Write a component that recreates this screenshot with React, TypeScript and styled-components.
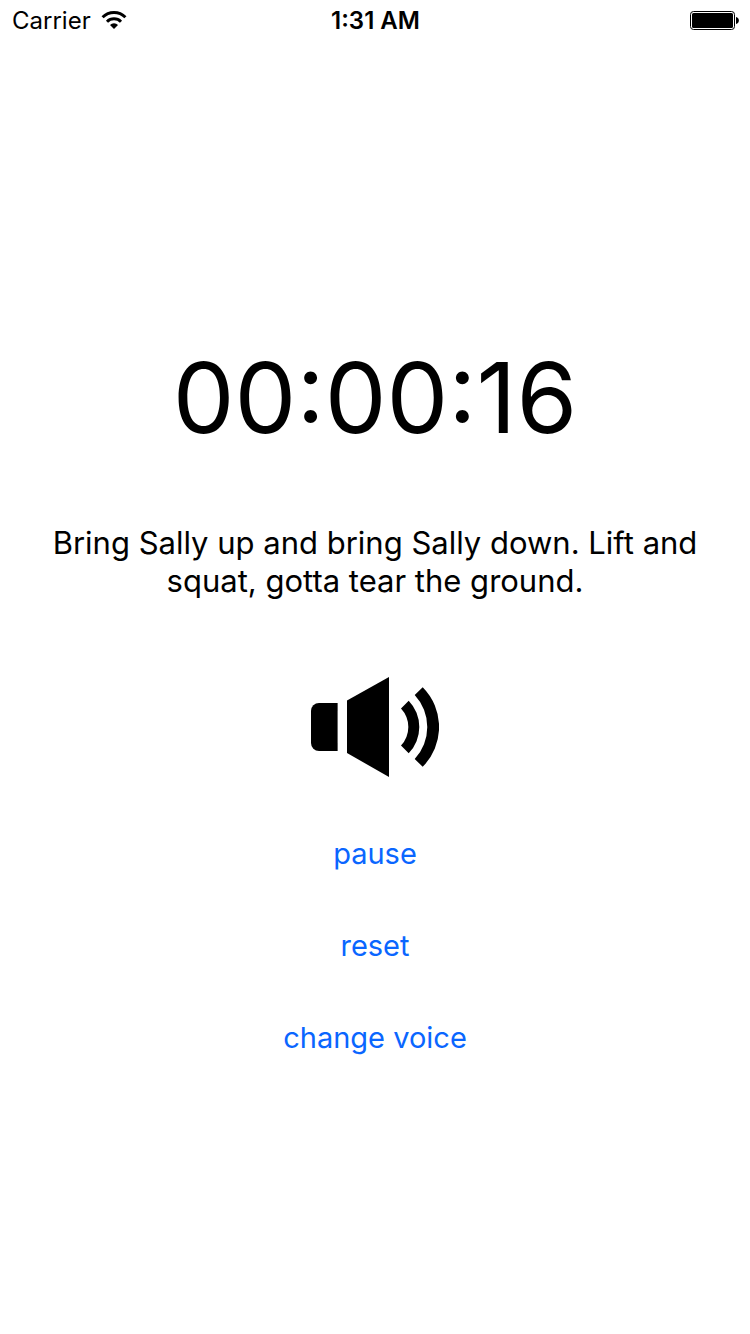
import React from "react";
import styled, { createGlobalStyle } from "styled-components";

const GlobalStyle = createGlobalStyle`
  *, *::before, *::after { box-sizing: border-box; }
  body {
    margin: 0;
    background: #fff;
    color: #000;
    font-family: Inter, "Liberation Sans", sans-serif;
  }
`;

const Screen = styled.div`
  display: flex;
  flex-direction: column;
  min-height: 100vh;
`;

const StatusBar = styled.header`
  display: grid;
  grid-template-columns: 1fr auto 1fr;
  align-items: center;
  height: 42px;
  padding: 0 11px 0 12px;
  font-size: 24px;
  line-height: 42px;
`;

const Carrier = styled.div`
  display: flex;
  align-items: center;
  gap: 10px;
`;

const Clock = styled.time`
  font-weight: 600;
`;

const BatterySlot = styled.div`
  display: flex;
  justify-content: flex-end;
`;

const Main = styled.main`
  display: flex;
  flex: 1;
  flex-direction: column;
  align-items: center;
  padding: 296px 32px 64px;
`;

const Timer = styled.h1`
  margin: 0;
  font-size: 98px;
  font-weight: 400;
  line-height: 120px;
`;

const Lyrics = styled.p`
  max-width: 680px;
  margin: 66px 0 77px;
  font-size: 31px;
  line-height: 38px;
  text-align: center;
`;

const Actions = styled.div`
  display: flex;
  flex-direction: column;
  align-items: center;
  gap: 32px;
  margin-top: 47px;
`;

const ActionButton = styled.button`
  padding: 0;
  border: 0;
  background: none;
  color: #0a66ff;
  font-family: inherit;
  font-size: 29px;
  line-height: 60px;
  cursor: pointer;
`;

const WifiIcon = () => (
  <svg width="26" height="20" viewBox="0 1 26 20" role="img" aria-label="Wi-Fi">
    <g fill="none" stroke="#000" strokeWidth="3">
      <path d="M1.6 7.2A16.2 16.2 0 0 1 24.4 7.2" />
      <path d="M6 11.7A10 10 0 0 1 20 11.7" />
    </g>
    <path d="M9 15A5.6 5.6 0 0 1 17 15L13 19Z" />
  </svg>
);

const BatteryIcon = () => (
  <svg width="49" height="20" viewBox="0 0 49 20" role="img" aria-label="Battery full">
    <rect x="0.5" y="0.5" width="44" height="18" rx="3" fill="none" stroke="#000" />
    <rect x="2" y="2" width="41" height="15" rx="1.5" />
    <path d="M46 6C49.8 6.8 49.8 12.2 46 13Z" />
  </svg>
);

const SpeakerIcon = () => (
  <svg width="128" height="100" viewBox="0 0 128 100" role="img" aria-label="Sound on">
    <path d="M8 26H26.6V74H8A8 8 0 0 1 0 66V34A8 8 0 0 1 8 26Z" />
    <path d="M36 23.5L78 0V100L36 76Z" />
    <path d="M97.7 23.8A37.7 37.7 0 0 1 97.7 76.2L90 68.5A27 27 0 0 0 90 31.5Z" />
    <path d="M111.7 10.2A56.5 56.5 0 0 1 111.7 89.8L103.7 82A47 47 0 0 0 103.7 18Z" />
  </svg>
);

export default function App() {
  return (
    <Screen>
      <GlobalStyle />
      <StatusBar>
        <Carrier>
          <span>Carrier</span>
          <WifiIcon />
        </Carrier>
        <Clock>1:31 AM</Clock>
        <BatterySlot>
          <BatteryIcon />
        </BatterySlot>
      </StatusBar>
      <Main>
        <Timer>00:00:16</Timer>
        <Lyrics>Bring Sally up and bring Sally down. Lift and squat, gotta tear the ground.</Lyrics>
        <SpeakerIcon />
        <Actions>
          <ActionButton type="button">pause</ActionButton>
          <ActionButton type="button">reset</ActionButton>
          <ActionButton type="button">change voice</ActionButton>
        </Actions>
      </Main>
    </Screen>
  );
}
